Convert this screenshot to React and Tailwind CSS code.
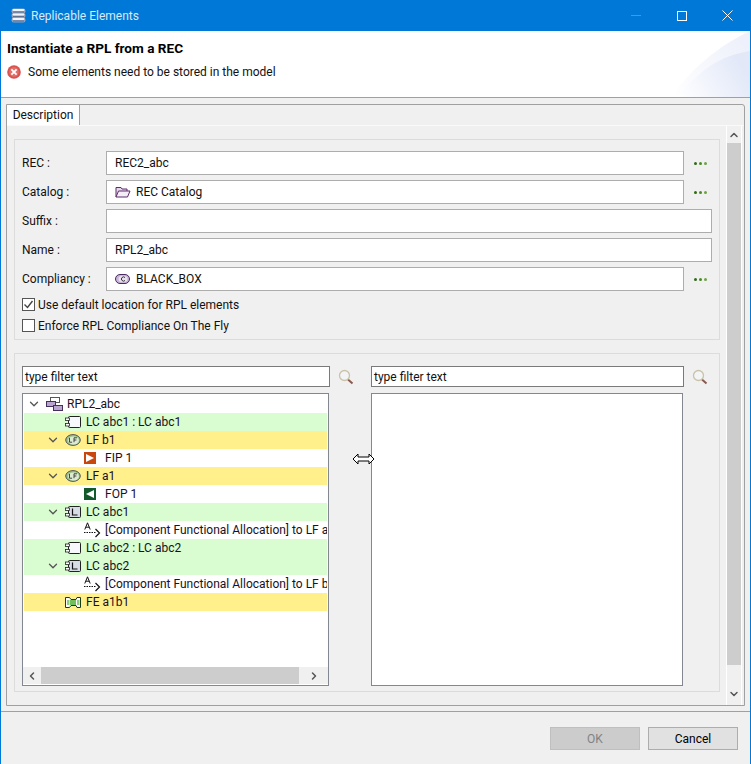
import { ChevronDown, ChevronLeft, ChevronRight, ChevronUp } from 'lucide-react'

function StackIcon() {
  return (
    <svg width="15" height="15" viewBox="0 0 15 15">
      {[0, 4.5, 9].map(y => (
        <g key={y}>
          <rect x="0.5" y={y + 0.5} width="14" height="5" rx="2.2" fill="#8fa0bd" />
          <rect x="1.5" y={y + 1} width="12" height="2" rx="1" fill="#f1f4fa" />
          <rect x="2" y={y + 3.6} width="11" height="0.9" fill="#5a6d8e" />
        </g>
      ))}
    </svg>
  )
}

function ErrorIcon() {
  return (
    <svg width="14" height="14" viewBox="0 0 14 14">
      <circle cx="7" cy="7" r="6.8" fill="#d9534f" />
      <circle cx="7" cy="7" r="4.8" fill="#e2706b" />
      <path d="M4.4 4.4 9.6 9.6M9.6 4.4 4.4 9.6" stroke="#fff" strokeWidth="1.8" />
    </svg>
  )
}

function Dots() {
  return (
    <div className="flex gap-[2px] pl-[10px]">
      <span className="w-[3px] h-[3px] rounded-full bg-[#2f6b10]" />
      <span className="w-[3px] h-[3px] rounded-full bg-[#4a8a24]" />
      <span className="w-[3px] h-[3px] rounded-full bg-[#6ba345]" />
    </div>
  )
}

function FolderIcon() {
  return (
    <svg width="16" height="12" viewBox="0 0 16 12">
      <path d="M1 11V1.5h5l1 1.5h5v2" fill="#e6d9ea" stroke="#5d2b6c" />
      <path d="M1 11 3.5 5H15l-2.5 6z" fill="#f3edf5" stroke="#5d2b6c" />
    </svg>
  )
}

function ClassIcon() {
  return (
    <svg width="15" height="10" viewBox="0 0 15 10">
      <rect x="0.5" y="0.5" width="14" height="9" rx="4.5" fill="#c9b3d6" stroke="#4b2a63" />
      <ellipse cx="8" cy="5" rx="4.5" ry="3.2" fill="#e9e2ef" />
      <path d="M10 3.500a2.100 2.100 0 1 0 0 3" fill="none" stroke="#333" />
    </svg>
  )
}

function Magnifier() {
  return (
    <svg width="16" height="16" viewBox="0 0 16 16">
      <path d="m10 10.5 4.5 4" stroke="#8a5a50" strokeWidth="2" />
      <circle cx="6.5" cy="6.5" r="5" fill="#f2f4f6" stroke="#c9c3a8" strokeWidth="1.3" />
    </svg>
  )
}

function TreeRootIcon() {
  return (
    <svg width="17" height="15" viewBox="0 0 17 15">
      <rect x="4.5" y="0.5" width="9" height="5" fill="#fff" stroke="#555" />
      <rect x="0.5" y="4.5" width="9" height="5" fill="#b9a5cf" stroke="#45305c" />
      <rect x="7.5" y="8.5" width="9" height="5" fill="#b9a5cf" stroke="#45305c" />
    </svg>
  )
}

function ComponentIcon({ letter }) {
  return (
    <svg width="16" height="12" viewBox="0 0 16 12">
      <rect x="3.5" y="0.5" width="12" height="11" rx="1" fill={letter ? '#d6dde6' : '#f6f8fc'} stroke="#222" />
      <rect x="0.5" y="2" width="4" height="2.5" fill="#fff" stroke="#222" strokeWidth="0.8" />
      <rect x="0.5" y="7.5" width="4" height="2.5" fill="#fff" stroke="#222" strokeWidth="0.8" />
      {letter && <path d="M7.500 2.500V9h5" fill="none" stroke="#111" strokeWidth="1.2" />}
    </svg>
  )
}

function FunctionIcon() {
  return (
    <svg width="16" height="12" viewBox="0 0 16 12">
      <ellipse cx="8" cy="6" rx="7.3" ry="5.4" fill="#9cc48a" stroke="#555" />
      <ellipse cx="8.5" cy="6.4" rx="5.4" ry="4" fill="#dcebd2" />
      <path d="M4.500 3.800v4.400h2.600M9 8.200V3.800h3M9 6h2.400" fill="none" stroke="#333" strokeWidth="0.9" />
    </svg>
  )
}

function PortIcon({ out }) {
  return (
    <svg width="12" height="12" viewBox="0 0 12 12">
      <rect width="12" height="12" fill={out ? '#14592c' : '#c8470f'} />
      <path d={out ? 'M10 2v8L2 6z' : 'M2 2v8l8-4z'} fill="#fff" />
    </svg>
  )
}

function AllocIcon() {
  return (
    <svg width="17" height="16" viewBox="0 0 17 16">
      <path d="M0.8 7.5 3.5 0.8 6.2 7.5M1.9 5.2h3.2" fill="none" stroke="#111" />
      <path d="M0 10.5h12" stroke="#111" strokeDasharray="1.5 1" />
      <path d="m11.5 7 4 4-4 4" fill="none" stroke="#111" strokeWidth="1.2" />
    </svg>
  )
}

function ExchangeIcon() {
  return (
    <svg width="16" height="11" viewBox="0 0 16 11">
      <path d="M.5.5h4l1.500 2h5l1-2h3.500v10h-3.500l-1-2h-5l-1.500 2h-4z" fill="#fff" stroke="#1d3a18" />
      <path d="M5 3h6v5H5z" fill="#6fbf5c" />
      <path d="M12 3h2.500v5H12zM2 3h2.500v5H2z" fill="#8fce7e" />
    </svg>
  )
}

const levelPad = ['pl-[3px]', 'pl-[22px]', 'pl-[41px]']
const rowBg = { green: 'bg-[#d9fcd0]', yellow: 'bg-[#fff08c]', none: '' }

const treeRows = [
  { level: 0, open: true, icon: <TreeRootIcon />, label: 'RPL2_abc', bg: 'none' },
  { level: 1, icon: <ComponentIcon />, label: 'LC abc1 : LC abc1', bg: 'green' },
  { level: 1, open: true, icon: <FunctionIcon />, label: 'LF b1', bg: 'yellow' },
  { level: 2, icon: <PortIcon />, label: 'FIP 1', bg: 'none' },
  { level: 1, open: true, icon: <FunctionIcon />, label: 'LF a1', bg: 'yellow' },
  { level: 2, icon: <PortIcon out />, label: 'FOP 1', bg: 'none' },
  { level: 1, open: true, icon: <ComponentIcon letter />, label: 'LC abc1', bg: 'green' },
  { level: 2, icon: <AllocIcon />, label: '[Component Functional Allocation] to LF a1', bg: 'none' },
  { level: 1, icon: <ComponentIcon />, label: 'LC abc2 : LC abc2', bg: 'green' },
  { level: 1, open: true, icon: <ComponentIcon letter />, label: 'LC abc2', bg: 'green' },
  { level: 2, icon: <AllocIcon />, label: '[Component Functional Allocation] to LF b1', bg: 'none' },
  { level: 1, icon: <ExchangeIcon />, label: 'FE a1b1', bg: 'yellow' },
]

function TreeRow({ row }) {
  return (
    <div className={`h-[18px] flex items-center whitespace-nowrap overflow-hidden ${levelPad[row.level]} ${rowBg[row.bg]}`}>
      <span className="w-[19px] shrink-0 flex justify-start">
        {row.open && <ChevronDown className="w-[14px] h-[14px] text-[#555]" strokeWidth={2.2} />}
      </span>
      <span className="w-[21px] shrink-0 flex items-center">{row.icon}</span>
      <span className="text-[#1a1020]">{row.label}</span>
    </div>
  )
}

function Field({ label, value, icon, wide }) {
  return (
    <>
      <span className="h-6 flex items-center">{label}</span>
      <div className={`h-6 bg-white border border-[#adadad] flex items-center pl-2 gap-[5px] ${wide ? 'col-span-2' : ''}`}>
        {icon && <span className="w-4 flex items-center">{icon}</span>}
        <span>{value}</span>
      </div>
      {!wide && <Dots />}
    </>
  )
}

function Check({ checked, label }) {
  return (
    <div className="h-[13px] flex items-center gap-[3px]">
      <span className="w-[13px] h-[13px] border border-[#555] bg-white flex items-center justify-center">
        {checked && (
          <svg width="11" height="11" viewBox="0 0 11 11">
            <path d="m1.500 5.500 3 3 5-6.500" fill="none" stroke="#444" strokeWidth="1.4" />
          </svg>
        )}
      </span>
      <span>{label}</span>
    </div>
  )
}

export default function App() {
  return (
    <div className="w-[751px] h-[764px] relative flex flex-col overflow-hidden bg-[#f0f0f0] border-x border-[#0078d7] text-xs text-[#111] font-['Roboto','Noto_Sans',sans-serif]">
      {/* title bar */}
      <div className="h-[31px] shrink-0 -mx-px bg-[#0078d7] flex items-center pl-[11px] text-white">
        <StackIcon />
        <span className="ml-[5px] text-[#d8e9f8]">Replicable Elements</span>
        <div className="ml-auto flex items-center h-full">
          <span className="w-[10px] h-px bg-[#3d9ae4] mr-[36px]" />
          <span className="w-[10px] h-[10px] border border-white mr-[35px]" />
          <svg className="mr-[18px]" width="11" height="11" viewBox="0 0 11 11">
            <path d="m.5.5 10 10M10.500.5l-10 10" stroke="#fff" />
          </svg>
        </div>
      </div>

      {/* header */}
      <div className="h-[67px] shrink-0 relative bg-white border-b border-[#a0a0a0] pl-[6px] overflow-hidden">
        <svg className="absolute right-0 top-0" width="80" height="66" viewBox="0 0 80 66">
          <defs>
            <linearGradient id="arc" x1="0" y1="1" x2="1" y2="0.6">
              <stop offset="0" stopColor="#ffffff" />
              <stop offset="1" stopColor="#e2e8f8" />
            </linearGradient>
            <linearGradient id="arcLight" x1="0" y1="1" x2="1" y2="0.3">
              <stop offset="0" stopColor="#ffffff" />
              <stop offset="1" stopColor="#eef1fb" />
            </linearGradient>
          </defs>
          <path d="M2 66C20 38 50 14 80 0v66z" fill="url(#arcLight)" />
          <path d="M8 66C26 42 50 24 80 20v46z" fill="url(#arc)" />
        </svg>
        <div className="h-[33px] pt-px flex items-center font-bold text-[13.6px] text-black">Instantiate a RPL from a REC</div>
        <div className="flex items-center gap-[7px]">
          <ErrorIcon />
          <span>Some elements need to be stored in the model</span>
        </div>
      </div>

      {/* tab folder */}
      <div className="h-[602px] shrink-0 ml-[5px] mr-[5px] mt-[6px] border border-[#a0a0a0] rounded-tr-[3px] flex flex-col">
        <div className="h-5 shrink-0 flex">
          <div className="w-[73px] bg-white border-r border-[#a0a0a0] flex items-center justify-center">Description</div>
        </div>
        <div className="flex-1 min-h-0 flex border-t border-[#fafafa]">
          <div className="w-[714px] shrink-0 pl-[7px] pt-[13px]">
            {/* form group */}
            <div className="w-[706px] h-[201px] border border-[#dcdcdc] pt-[11px] pl-[7px] pr-[7px]">
              <div className="grid grid-cols-[84px_1fr_28px] gap-y-[5px] items-center">
                <Field label="REC :" value="REC2_abc" />
                <Field label="Catalog :" value="REC Catalog" icon={<FolderIcon />} />
                <Field label="Suffix :" value="" wide />
                <Field label="Name :" value="RPL2_abc" wide />
                <Field label="Compliancy :" value="BLACK_BOX" icon={<ClassIcon />} />
              </div>
              <div className="flex flex-col gap-2 mt-[7px]">
                <Check checked label="Use default location for RPL elements" />
                <Check label="Enforce RPL Compliance On The Fly" />
              </div>
            </div>

            {/* selection group */}
            <div className="w-[706px] h-[339px] mt-[13px] border border-[#dcdcdc] pt-3 pl-[7px] flex">
              <div className="w-[308px] shrink-0 flex flex-col">
                <div className="h-[21px] bg-white border border-[#7a7a7a] flex items-center pl-[2px]">type filter text</div>
                <div className="h-[293px] mt-[6px] w-[307px] bg-white border border-[#828790] flex flex-col p-px pb-0">
                  <div className="flex-1 min-h-0 overflow-hidden">
                    {treeRows.map((row, i) => <TreeRow key={i} row={row} />)}
                  </div>
                  <div className="h-[17px] mb-px -mx-px bg-[#f0f0f0] flex items-center">
                    <span className="w-[18px] flex justify-center"><ChevronLeft className="w-3 h-3 text-[#555]" strokeWidth={3} /></span>
                    <span className="w-[258px] h-full bg-[#cdcdcd]" />
                    <span className="flex-1 flex justify-center"><ChevronRight className="w-3 h-3 text-[#555]" strokeWidth={3} /></span>
                  </div>
                </div>
              </div>
              <div className="w-[41px] shrink-0 pl-2 h-[21px] flex items-center"><Magnifier /></div>
              <div className="w-[313px] shrink-0 flex flex-col">
                <div className="h-[21px] bg-white border border-[#7a7a7a] flex items-center pl-[2px]">type filter text</div>
                <div className="h-[293px] mt-[6px] w-[312px] bg-white border border-[#828790]" />
              </div>
              <div className="pl-2 h-[21px] flex items-center"><Magnifier /></div>
            </div>
          </div>

          {/* outer scrollbar */}
          <div className="w-[16px] ml-[5px] shrink-0 bg-[#f0f0f0] border-x border-white flex flex-col items-center">
            <ChevronUp className="w-3 h-3 mt-[3px] text-[#555]" strokeWidth={3} />
            <div className="w-full h-[522px] bg-[#cdcdcd] mt-[2px]" />
            <ChevronDown className="w-3 h-3 mt-[23px] text-[#555]" strokeWidth={3} />
          </div>
        </div>
      </div>

      {/* buttons */}
      <div className="flex-1 mt-[5px] border-t border-[#a0a0a0] flex justify-end gap-2 pt-[15px] pr-3">
        <div className="w-[90px] h-[23px] bg-[#cccccc] border border-[#bfbfbf] text-[#838383] flex items-center justify-center">OK</div>
        <div className="w-[90px] h-[23px] bg-[#e1e1e1] border border-[#adadad] text-black flex items-center justify-center">Cancel</div>
      </div>

      {/* resize cursor over the sash */}
      <svg className="absolute left-[351px] top-[453px]" width="24" height="12" viewBox="0 0 24 12">
        <path d="M1 6 6 1v3h11V1l5 5-5 5V8H6v3z" fill="#fff" stroke="#000" />
      </svg>
    </div>
  )
}
